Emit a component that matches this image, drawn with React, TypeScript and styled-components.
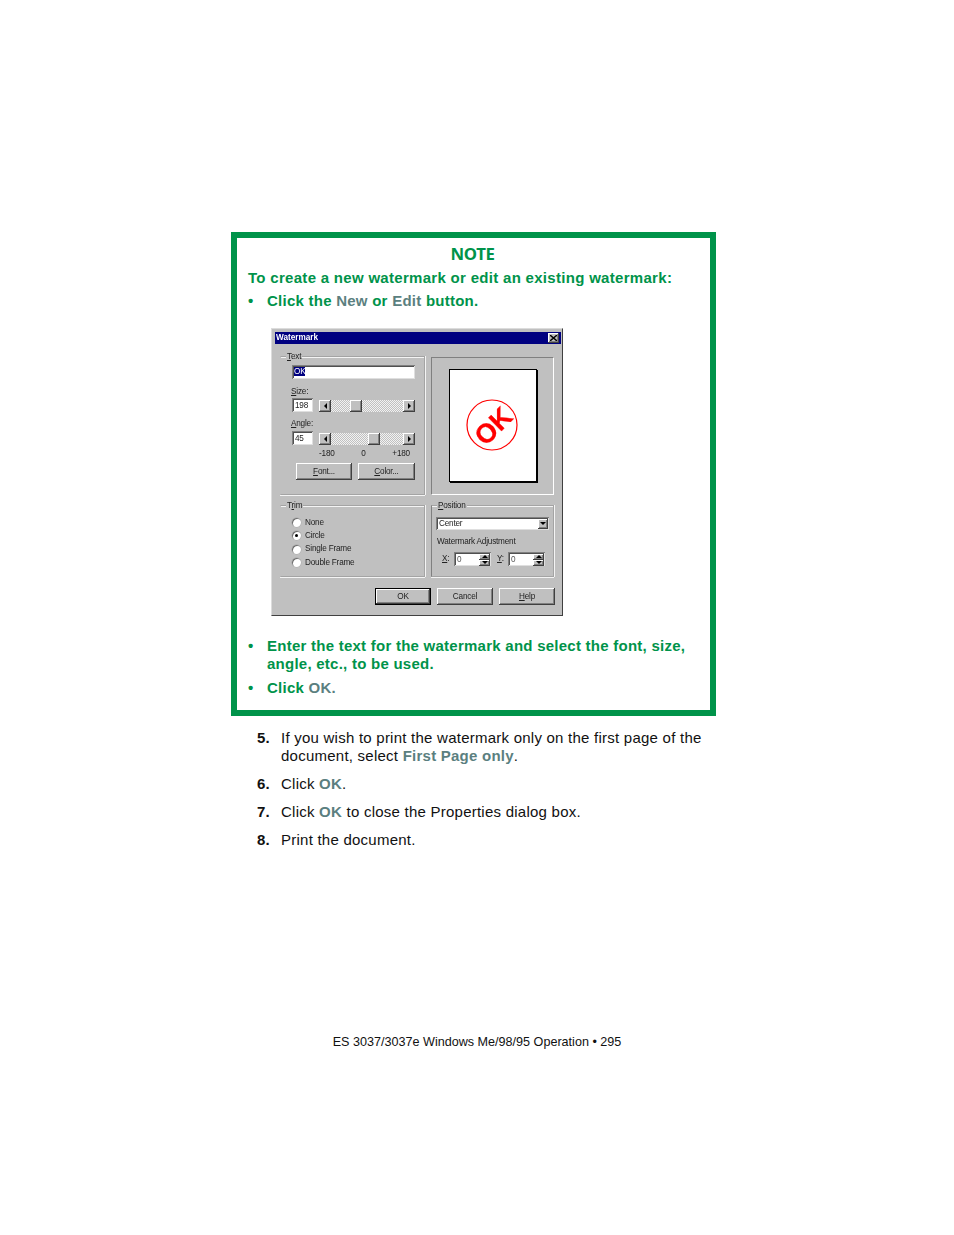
import React from "react";
import styled, { createGlobalStyle, css } from "styled-components";

const Global = createGlobalStyle`
  html, body { margin: 0; padding: 0; background: #fff; }
  body { font-family: "Liberation Sans", Arial, sans-serif; color: #111; }
`;

const GREEN = "#00934a";
const SLATE = "#5b7f80";

const Page = styled.div`
  width: 954px;
  height: 1235px;
  padding: 232px 0 0 231px;
  box-sizing: border-box;
  overflow: hidden;
`;
const NoteBox = styled.section`
  width: 485px;
  height: 484px;
  box-sizing: border-box;
  border: 6px solid ${GREEN};
  padding: 7px 11px 0 11px;
  color: ${GREEN};
  font-weight: 700;
  font-size: 15px;
  letter-spacing: 0.25px;
  line-height: 18px;
`;
const NoteTitle = styled.h2`
  margin: 0 0 6px;
  font: 700 16.8px/18px "Noto Sans", "Open Sans", sans-serif;
  text-align: center;
  letter-spacing: -0.4px;
  padding-right: 2px;
`;
const NoteLead = styled.p`
  margin: 0 0 5px;
  letter-spacing: 0.3px;
`;
const Bullet = styled.div<{ $gap?: number }>`
  display: flex;
  margin-top: ${(p) => p.$gap ?? 0}px;
  &::before {
    content: "•";
    flex: 0 0 19px;
  }
`;
const Ui = styled.span`
  color: ${SLATE};
`;

const bevel = css`
  background: #c0c0c0;
  box-shadow: inset -1px -1px 0 #404040, inset 1px 1px 0 #fff, inset -2px -2px 0 #808080;
`;
const sunken = css`
  background: #fff;
  box-shadow: inset 1px 1px 0 #808080, inset -1px -1px 0 #dfdfdf, inset 2px 2px 0 #505050;
`;

const Dialog = styled.div`
  width: 292px;
  height: 288px;
  box-sizing: border-box;
  margin: 18px 0 21px 23px;
  padding: 3px 1px 0 3px;
  background: #c0c0c0;
  border-top: 1px solid #dcdcdc;
  border-left: 1px solid #dcdcdc;
  border-right: 1px solid #404040;
  border-bottom: 1px solid #404040;
  font: 400 8.2px/10px "Liberation Sans", Arial, sans-serif;
  letter-spacing: -0.2px;
  color: #222;
  filter: blur(0.3px);
`;
const TitleBar = styled.div`
  height: 12px;
  background: #000080;
  color: #fff;
  font-weight: 700;
  font-size: 8.2px;
  letter-spacing: 0;
  line-height: 12px;
  padding: 0 2px 0 1px;
  display: flex;
  justify-content: space-between;
  align-items: center;
`;
const CloseBtn = styled.span`
  ${bevel}
  width: 11px;
  height: 10px;
  display: flex;
  align-items: center;
  justify-content: center;
`;
const Body = styled.div`
  width: 275px;
  margin: 12px 0 0 5px;
  display: grid;
  grid-template-columns: 145px 123px;
  grid-template-rows: 139px 72px;
  gap: 10px 6px;
`;
const Group = styled.div<{ $left?: boolean; $inset?: string }>`
  position: relative;
  box-sizing: border-box;
  padding: ${(p) => p.$inset ?? "0"};
  border: 1px solid #a4a4a4;
  border-left-color: ${(p) => (p.$left ? "#808080" : "transparent")};
  box-shadow: 1px 0 0 #f4f4f4, 0 1px 0 #f4f4f4, inset 0 1px 0 #f4f4f4;
`;
const PreviewGroup = styled.div`
  box-sizing: border-box;
  margin-top: 1px;
  display: flex;
  justify-content: center;
  padding: 11px 0 0 1px;
  border: 1px solid #808080;
  border-right-color: #fff;
  border-bottom-color: #fff;
`;
const Legend = styled.span`
  position: absolute;
  top: -5px;
  left: 5px;
  padding: 0 1px;
  background: #c0c0c0;
`;
const Key = styled.span`
  text-decoration: underline;
`;
const Sheet = styled.div`
  width: 88px;
  height: 113px;
  box-sizing: border-box;
  border: 1px solid #000;
  background: #fff;
  box-shadow: 1px 1px 0 #000;
`;
const FieldWide = styled.div`
  ${sunken}
  width: 123px;
  height: 14px;
  padding: 2px 0 0 2px;
  box-sizing: border-box;
`;
const Selected = styled.span`
  background: #000080;
  color: #fff;
`;
const FieldLabel = styled.div<{ $gap: number; $after: number }>`
  margin: ${(p) => p.$gap}px 0 ${(p) => p.$after}px -1px;
  height: 10px;
`;
const SliderRow = styled.div`
  display: flex;
  gap: 6px;
  align-items: flex-end;
`;
const FieldSmall = styled.div`
  ${sunken}
  width: 21px;
  height: 14px;
  padding: 3px 0 0 3px;
  box-sizing: border-box;
`;
const Track = styled.div`
  width: 96px;
  height: 12px;
  display: flex;
  background: repeating-conic-gradient(#f2f2f2 0 25%, #c0c0c0 0 50%) 0 0 / 2px 2px;
`;
const Thumb = styled.span`
  ${bevel}
  width: 12px;
  height: 12px;
  flex: none;
  display: flex;
  align-items: center;
  justify-content: center;
`;
const TrackGap = styled.span`
  flex: none;
`;
const Ticks = styled.div`
  margin: 4px 0 4px 27px;
  width: 91px;
  height: 10px;
  display: flex;
  justify-content: space-between;
`;
const Row = styled.div`
  display: flex;
  gap: 6px;
`;
const PushButton = styled.button<{ $w: number; $default?: boolean }>`
  ${bevel}
  width: ${(p) => p.$w}px;
  height: 17px;
  flex: none;
  border: ${(p) => (p.$default ? "1px solid #000" : "0")};
  padding: 0;
  margin: 0;
  font: inherit;
  letter-spacing: inherit;
  color: inherit;
  text-align: center;
`;
const FontBtnRow = styled(Row)`
  margin-left: 4px;
`;
const RadioRow = styled.div`
  display: flex;
  align-items: center;
  gap: 4px;
  height: 13.3px;
`;
const Radio = styled.span<{ $on?: boolean }>`
  width: 9px;
  height: 9px;
  border-radius: 50%;
  background: #fff;
  box-shadow: inset 1px 1px 0 #707070, 0 0 0 0.5px #a8a8a8;
  display: flex;
  align-items: center;
  justify-content: center;
  &::after {
    content: "";
    width: 3px;
    height: 3px;
    border-radius: 50%;
    background: ${(p) => (p.$on ? "#000" : "transparent")};
  }
`;
const Combo = styled.div`
  ${sunken}
  width: 113px;
  height: 13px;
  box-sizing: border-box;
  padding: 0 1px 0 3px;
  display: flex;
  justify-content: space-between;
  align-items: center;
`;
const ComboArrow = styled.span`
  ${bevel}
  width: 10px;
  height: 10px;
  display: flex;
  align-items: center;
  justify-content: center;
`;
const AdjustLabel = styled.div`
  margin: 7px 0 5px 1px;
  height: 10px;
  white-space: nowrap;
`;
const SpinRow = styled.div`
  display: flex;
  align-items: center;
  margin-left: 6px;
`;
const SpinLabel = styled.span<{ $w: number }>`
  width: ${(p) => p.$w}px;
  flex: none;
`;
const Spin = styled.div`
  ${sunken}
  width: 37px;
  height: 14px;
  box-sizing: border-box;
  padding: 1px 1px 0 3px;
  margin-right: 6px;
  display: flex;
  justify-content: space-between;
  align-items: center;
  color: #555;
`;
const SpinButtons = styled.span`
  width: 11px;
  height: 12px;
  display: flex;
  flex-direction: column;
`;
const SpinPart = styled.span`
  ${bevel}
  flex: 1;
  display: flex;
  align-items: center;
  justify-content: center;
`;
const Actions = styled.div`
  width: 275px;
  margin: 11px 0 0 5px;
  display: flex;
  justify-content: flex-end;
  gap: 6px;
`;
const Steps = styled.ol`
  list-style: none;
  margin: 13px 0 0 26px;
  padding: 0;
  width: 450px;
  font-size: 15px;
  letter-spacing: 0.24px;
  line-height: 18px;
`;
const Step = styled.li`
  display: flex;
  margin-bottom: 10px;
`;
const StepNum = styled.b`
  flex: 0 0 24px;
`;
const StrongUi = styled.b`
  color: ${SLATE};
`;
const Footer = styled.footer`
  margin: 184px 0 0 -231px;
  width: 954px;
  text-align: center;
  font-size: 12.6px;
  line-height: 18px;
`;

const Tri = ({ dir }: { dir: "l" | "r" | "d" | "u" }) => {
  const pts = { l: "4,0 4,6 1,3", r: "1,0 1,6 4,3", d: "0,1 6,1 3,4", u: "0,4 6,4 3,1" }[dir];
  const side = dir === "l" || dir === "r";
  return (
    <svg width={side ? 5 : 6} height={side ? 6 : 5} viewBox={side ? "0 0 5 6" : "0 0 6 5"}>
      <polygon points={pts} fill="#000" />
    </svg>
  );
};

const Slider = ({ before }: { before: number }) => (
  <Track>
    <Thumb><Tri dir="l" /></Thumb>
    <TrackGap style={{ width: before }} />
    <Thumb />
    <TrackGap style={{ flex: 1 }} />
    <Thumb><Tri dir="r" /></Thumb>
  </Track>
);

const SpinBox = () => (
  <Spin>
    0
    <SpinButtons>
      <SpinPart><Tri dir="u" /></SpinPart>
      <SpinPart><Tri dir="d" /></SpinPart>
    </SpinButtons>
  </Spin>
);

const Stamp = () => (
  <svg width="86" height="111" viewBox="0 0 86 111">
    <circle cx="42" cy="55" r="25" fill="none" stroke="#f00" strokeWidth="1.2" />
    <text
      x="42"
      y="66"
      textAnchor="middle"
      fill="#f00"
      stroke="#f00"
      strokeWidth="0.3"
      fontFamily="Liberation Sans, Arial, sans-serif"
      fontWeight="700"
      fontSize="27"
      letterSpacing="0"
      transform="rotate(-45 42 55)"
    >
      OK
    </text>
  </svg>
);

export default function App() {
  return (
    <Page>
      <Global />
      <NoteBox>
        <NoteTitle>NOTE</NoteTitle>
        <NoteLead>To create a new watermark or edit an existing watermark:</NoteLead>
        <Bullet>
          <span>Click the <Ui>New</Ui> or <Ui>Edit</Ui> button.</span>
        </Bullet>
        <Dialog>
          <TitleBar>
            Watermark
            <CloseBtn>
              <svg width="7" height="6" viewBox="0 0 7 6">
                <path d="M0 0 L7 6 M7 0 L0 6" stroke="#000" strokeWidth="1.4" />
              </svg>
            </CloseBtn>
          </TitleBar>
          <Body>
            <Group $inset="8px 0 0 11px">
              <Legend><Key>T</Key>ext</Legend>
              <FieldWide><Selected>OK</Selected></FieldWide>
              <FieldLabel $gap={8} $after={1}><Key>S</Key>ize:</FieldLabel>
              <SliderRow>
                <FieldSmall>198</FieldSmall>
                <Slider before={19} />
              </SliderRow>
              <FieldLabel $gap={7} $after={2}><Key>A</Key>ngle:</FieldLabel>
              <SliderRow>
                <FieldSmall>45</FieldSmall>
                <Slider before={37} />
              </SliderRow>
              <Ticks>
                <span>-180</span>
                <span>0</span>
                <span>+180</span>
              </Ticks>
              <FontBtnRow>
                <PushButton $w={56}><Key>F</Key>ont...</PushButton>
                <PushButton $w={57}><Key>C</Key>olor...</PushButton>
              </FontBtnRow>
            </Group>
            <PreviewGroup>
              <Sheet><Stamp /></Sheet>
            </PreviewGroup>
            <Group $inset="10px 0 0 11px">
              <Legend>T<Key>r</Key>im</Legend>
              <RadioRow><Radio />None</RadioRow>
              <RadioRow><Radio $on />Circle</RadioRow>
              <RadioRow><Radio />Single Frame</RadioRow>
              <RadioRow><Radio />Double Frame</RadioRow>
            </Group>
            <Group $left $inset="11px 0 0 4px">
              <Legend><Key>P</Key>osition</Legend>
              <Combo>
                Center
                <ComboArrow><Tri dir="d" /></ComboArrow>
              </Combo>
              <AdjustLabel>Watermark Adjustment</AdjustLabel>
              <SpinRow>
                <SpinLabel $w={12}><Key>X</Key>:</SpinLabel>
                <SpinBox />
                <SpinLabel $w={11}><Key>Y</Key>:</SpinLabel>
                <SpinBox />
              </SpinRow>
            </Group>
          </Body>
          <Actions>
            <PushButton $w={56} $default>OK</PushButton>
            <PushButton $w={56}>Cancel</PushButton>
            <PushButton $w={56}><Key>H</Key>elp</PushButton>
          </Actions>
        </Dialog>
        <Bullet>
          <span>Enter the text for the watermark and select the font, size, angle, etc., to be used.</span>
        </Bullet>
        <Bullet $gap={6}>
          <span>Click <Ui>OK.</Ui></span>
        </Bullet>
      </NoteBox>
      <Steps>
        <Step>
          <StepNum>5.</StepNum>
          <span>If you wish to print the watermark only on the first page of the document, select <StrongUi>First Page only</StrongUi>.</span>
        </Step>
        <Step><StepNum>6.</StepNum><span>Click <StrongUi>OK</StrongUi>.</span></Step>
        <Step><StepNum>7.</StepNum><span>Click <StrongUi>OK</StrongUi> to close the Properties dialog box.</span></Step>
        <Step><StepNum>8.</StepNum><span>Print the document.</span></Step>
      </Steps>
      <Footer>ES 3037/3037e Windows Me/98/95 Operation • 295</Footer>
    </Page>
  );
}
